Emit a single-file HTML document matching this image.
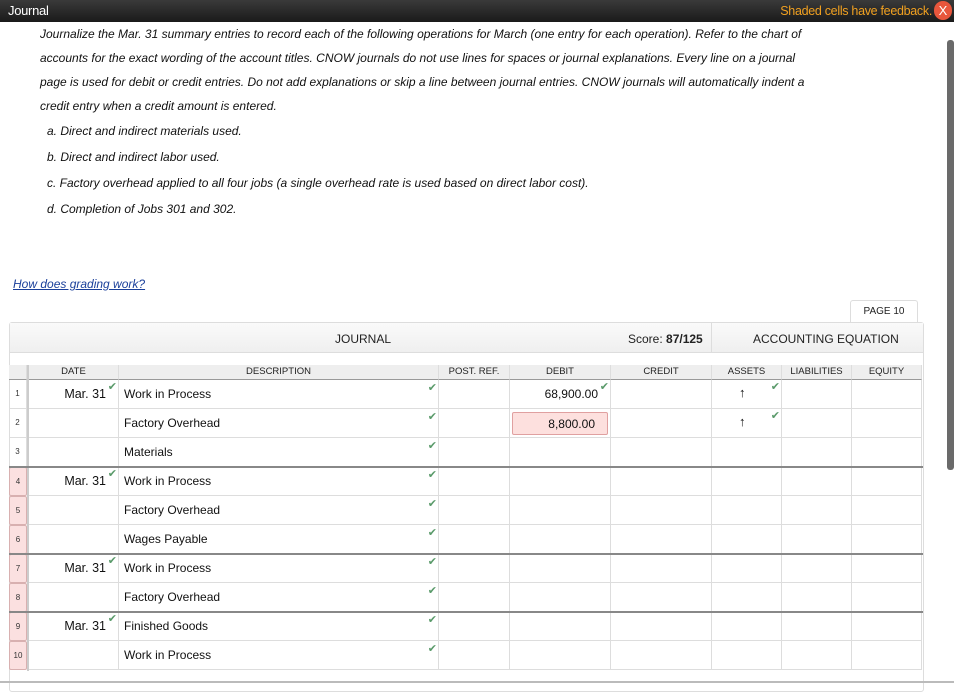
<!DOCTYPE html>
<html><head><meta charset="utf-8"><style>
*{margin:0;padding:0;box-sizing:border-box}
body{width:954px;height:683px;overflow:hidden;background:#fff;font-family:"Liberation Sans",sans-serif;position:relative}
.top{position:absolute;left:0;top:0;width:954px;height:22px;background:linear-gradient(#3a3a3a,#1a1a1a);}
.top .t{position:absolute;left:8px;top:3px;color:#fff;font-size:13px;letter-spacing:-0.3px}
.top .f{position:absolute;right:22px;top:4px;color:#f0a020;font-size:12.5px;letter-spacing:-0.3px}
.top .x{position:absolute;right:2px;top:1px;width:18px;height:19px;border-radius:9px;background:#e8563c;color:#fff;font-size:13px;text-align:center;line-height:19px}
.ins{position:absolute;left:40px;top:22px;width:775px;font-size:12px;font-style:italic;line-height:24px;color:#111}
.it{position:absolute;left:47px;font-size:12px;font-style:italic;color:#111}
.how{position:absolute;left:13px;top:277px;font-size:12px;font-style:italic;color:#1a3f9a;text-decoration:underline}
.sb{position:absolute;left:947px;top:40px;width:7px;height:430px;background:#6a6a6a;border-radius:3px}
.tab{position:absolute;left:850px;top:300px;width:68px;height:23px;border:1px solid #ddd;border-bottom:none;background:#fff;font-size:10px;text-align:center;line-height:22px;color:#222;border-radius:3px 3px 0 0}
.box{position:absolute;left:9px;top:322px;width:915px;height:370px;border:1px solid #ddd;border-radius:3px}
.hb{position:absolute;left:10px;top:323px;width:913px;height:30px;background:linear-gradient(#fafafa,#efefef);border-bottom:1px solid #ddd}
.hl{position:absolute;font-size:12px;color:#222;top:332px;font-family:"Liberation Sans Narrow","Liberation Sans",sans-serif}
.c{position:absolute;border-right:1px solid #ddd;border-bottom:1px solid #ddd;font-size:12px;color:#111;font-family:"Liberation Sans Narrow","Liberation Sans",sans-serif}
.h{background:#eee;font-size:9.5px;text-align:center;line-height:14px;color:#222;border-bottom:1px solid #999}
.n{font-size:8px;text-align:center;line-height:28px;color:#333}
.ck{position:absolute;color:#5a9a6a;font-size:11px;font-style:normal}
.thick{position:absolute;left:9px;width:914px;height:2px;background:#888}
</style></head><body>
<div class="top"><span class="t">Journal</span><span class="f">Shaded cells have feedback.</span><span class="x">X</span></div>
<div class="ins">Journalize the Mar. 31 summary entries to record each of the following operations for March (one entry for each operation). Refer to the chart of accounts for the exact wording of the account titles. CNOW journals do not use lines for spaces or journal explanations. Every line on a journal page is used for debit or credit entries. Do not add explanations or skip a line between journal entries. CNOW journals will automatically indent a credit entry when a credit amount is entered.</div>
<div class="it" style="top:124px">a. Direct and indirect materials used.</div>
<div class="it" style="top:150px">b. Direct and indirect labor used.</div>
<div class="it" style="top:176px">c. Factory overhead applied to all four jobs (a single overhead rate is used based on direct labor cost).</div>
<div class="it" style="top:202px">d. Completion of Jobs 301 and 302.</div>
<div class="how">How does grading work?</div>
<div class="sb"></div>
<div class="tab">PAGE 10</div>
<div class="box"></div>
<div class="hb"></div>
<div style="position:absolute;left:711px;top:323px;width:1px;height:30px;background:#ddd"></div>
<div class="hl" style="left:335px">JOURNAL</div>
<div class="hl" style="left:628px">Score: <b>87/125</b></div>
<div class="hl" style="left:753px">ACCOUNTING EQUATION</div>
<div id="g"></div>
<script>
var cols=[[9,18],[29,90],[119,320],[439,71],[510,101],[611,101],[712,70],[782,70],[852,70]];
var hd=["","DATE","DESCRIPTION","POST. REF.","DEBIT","CREDIT","ASSETS","LIABILITIES","EQUITY"];
var desc=["Work in Process","Factory Overhead","Materials","Work in Process","Factory Overhead","Wages Payable","Work in Process","Factory Overhead","Finished Goods","Work in Process"];
var date={0:1,3:1,6:1,8:1};
var s="";
s+='<div style="position:absolute;left:27px;top:365px;width:2px;height:306px;border-left:1px solid #ccc;border-right:1px solid #ccc"></div>';
for(var i=0;i<cols.length;i++){s+='<div class="c h" style="left:'+cols[i][0]+'px;top:365px;width:'+cols[i][1]+'px;height:15px">'+hd[i]+'</div>';}
for(var r=0;r<10;r++){var y=380+r*29;
 var pink=r>=3;
 s+='<div class="c n" style="left:9px;top:'+y+'px;width:18px;height:29px;'+(pink?'background:#fbe0e0;border:1px solid #d8b0b0;border-radius:2px;':'')+'">'+(r+1)+'</div>';
 for(var i=1;i<cols.length;i++){var x=cols[i][0],w=cols[i][1];var txt="";
  if(i==1&&date[r]){txt='<span style="position:absolute;right:12px;top:7px;font-size:12.5px">Mar. 31</span><span class="ck" style="right:1px;top:0px">✔</span>';}
  if(i==2){txt='<span style="position:absolute;left:5px;top:7px">'+desc[r]+'</span><span class="ck" style="right:1px;top:1px">✔</span>';}
  if(i==4&&r==0){txt='<span style="position:absolute;right:12px;top:7px">68,900.00</span><span class="ck" style="right:1px;top:0px">✔</span>';}
  if(i==4&&r==1){txt='<div style="position:absolute;left:2px;top:3px;width:96px;height:23px;background:#fde0de;border:1px solid #e0a0a0;border-radius:2px"><span style="position:absolute;right:12px;top:4px">8,800.00</span></div>';}
  if(i==6&&r<2){txt='<span style="position:absolute;left:27px;top:5px;font-size:13px;font-weight:bold">↑</span><span class="ck" style="right:1px;top:0px">✔</span>';}
  s+='<div class="c" style="left:'+x+'px;top:'+y+'px;width:'+w+'px;height:29px">'+txt+'</div>';}
}
[3,6,8].forEach(function(r){s+='<div class="thick" style="top:'+(379+r*29)+'px"></div>';});
s+='<div style="position:absolute;left:0;top:681px;width:954px;height:2px;background:#bbb"></div>';
document.getElementById("g").innerHTML=s;
</script>
</body></html>
